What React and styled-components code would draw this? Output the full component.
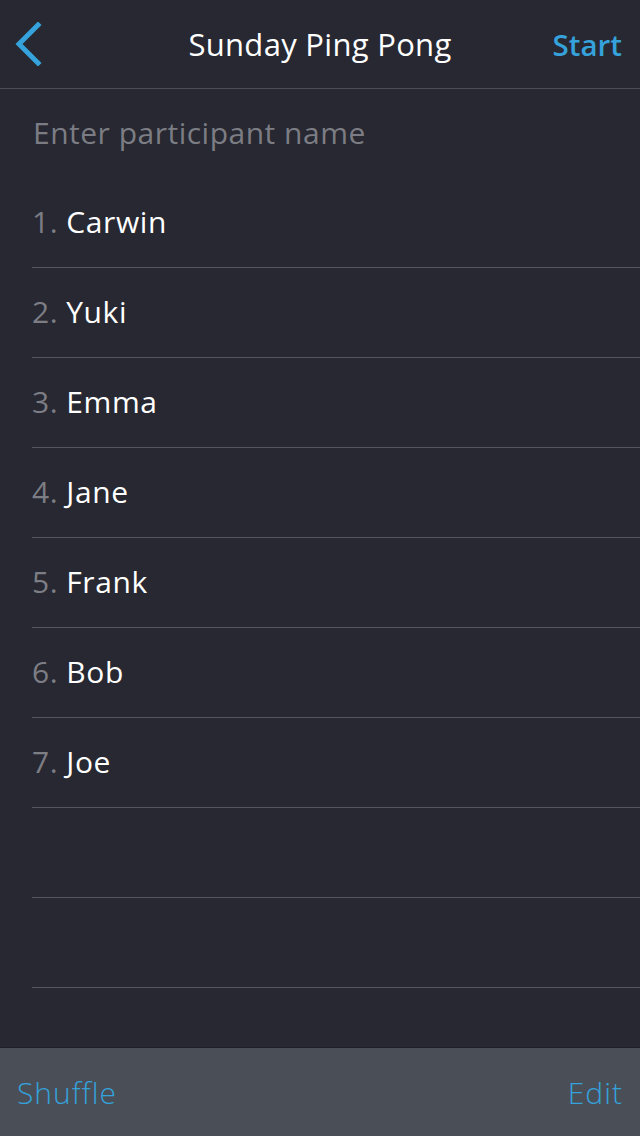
import React from "react";
import styled, { createGlobalStyle } from "styled-components";

const Global = createGlobalStyle`
  html, body { margin: 0; padding: 0; background: #272831; }
  body { font-family: "Open Sans", Lato, sans-serif; -webkit-font-smoothing: antialiased; }
  #root { height: 1136px; }
`;

const Screen = styled.div`
  width: 640px;
  height: 1136px;
  display: flex;
  flex-direction: column;
  background: #272831;
  overflow: hidden;
`;

const NavBar = styled.header`
  height: 88px;
  flex-shrink: 0;
  display: grid;
  grid-template-columns: 120px 1fr 120px;
  align-items: center;
  border-bottom: 1px solid #4d4e55;
`;

const BackButton = styled.button`
  justify-self: start;
  background: none;
  border: none;
  padding: 0 0 0 14px;
  height: 88px;
  display: flex;
  align-items: center;
  cursor: pointer;
`;

const Title = styled.h1`
  margin: 0;
  text-align: center;
  color: #ffffff;
  font-size: 31px;
  font-weight: 400;
  letter-spacing: 0.3px;
`;

const NavAction = styled.button`
  justify-self: end;
  background: none;
  border: none;
  padding: 0 18px 0 0;
  color: #35a2dc;
  font-family: inherit;
  font-size: 29.5px;
  font-weight: 600;
  cursor: pointer;
`;

const Content = styled.main`
  flex: 1;
  display: flex;
  flex-direction: column;
`;

const NameInput = styled.input`
  height: 89px;
  flex-shrink: 0;
  box-sizing: border-box;
  margin: 0;
  padding: 0 0 2px 33px;
  background: transparent;
  border: none;
  outline: none;
  color: #ffffff;
  font-family: inherit;
  font-size: 30px;
  font-weight: 400;
  letter-spacing: 0.5px;
  &::placeholder { color: #7c7d84; }
`;

const List = styled.ol`
  list-style: none;
  margin: 0;
  padding: 0 0 0 32px;
`;

const Row = styled.li`
  height: 90px;
  box-sizing: border-box;
  border-bottom: 1px solid #55565d;
  display: flex;
  align-items: center;
  padding-bottom: 2px;
  font-size: 30px;
  letter-spacing: 0.6px;
`;

const Num = styled.span`
  color: #7d7e85;
  margin-right: 8px;
`;

const Name = styled.span`
  color: #ffffff;
`;

const Toolbar = styled.footer`
  height: 88px;
  flex-shrink: 0;
  background: #4a4e57;
  border-top: 1px solid #1f2027;
  display: flex;
  align-items: center;
  justify-content: space-between;
  padding: 0 17px;
`;

const ToolButton = styled.button`
  background: none;
  border: none;
  padding: 0;
  color: #35a2dc;
  font-family: inherit;
  font-size: 30px;
  font-weight: 300;
  letter-spacing: 1px;
  cursor: pointer;
`;

const participants = ["Carwin", "Yuki", "Emma", "Jane", "Frank", "Bob", "Joe", "", ""];

export default function App() {
  return (
    <Screen>
      <Global />
      <NavBar>
        <BackButton aria-label="Back">
          <svg width="30" height="44" viewBox="0 0 30 44">
            <path d="M24 3 L5 22 L24 41" fill="none" stroke="#35a2dc" strokeWidth="5" strokeLinecap="square" />
          </svg>
        </BackButton>
        <Title>Sunday Ping Pong</Title>
        <NavAction>Start</NavAction>
      </NavBar>
      <Content>
        <NameInput placeholder="Enter participant name" />
        <List>
          {participants.map((p, i) => (
            <Row key={i}>
              {p && (
                <>
                  <Num>{i + 1}.</Num>
                  <Name>{p}</Name>
                </>
              )}
            </Row>
          ))}
        </List>
      </Content>
      <Toolbar>
        <ToolButton>Shuffle</ToolButton>
        <ToolButton>Edit</ToolButton>
      </Toolbar>
    </Screen>
  );
}
